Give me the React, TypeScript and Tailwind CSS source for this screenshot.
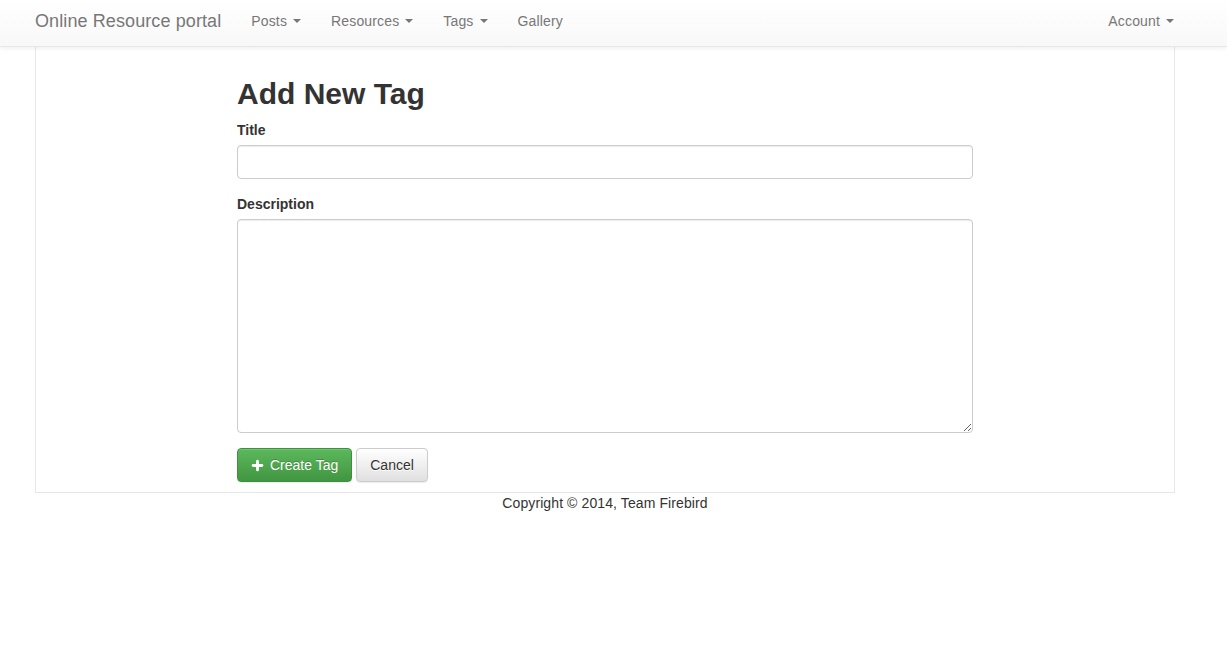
import { Plus } from 'lucide-react';

const navLinks = [
  { label: 'Posts', caret: true },
  { label: 'Resources', caret: true },
  { label: 'Tags', caret: true },
  { label: 'Gallery', caret: false },
];

function Caret() {
  return (
    <span className="ml-[6px] inline-block h-0 w-0 border-x-[4px] border-t-[4px] border-x-transparent border-t-[#777] align-middle" />
  );
}

export default function App() {
  return (
    <div className="min-h-screen bg-white text-[14px] text-[#333]" style={{ fontFamily: '"Liberation Sans", Arial, sans-serif' }}>
      {/* Navbar */}
      <nav className="relative z-10 h-[47px] border-b border-[#e7e7e7] bg-gradient-to-b from-white to-[#f8f8f8] shadow-[0_1px_5px_rgba(0,0,0,0.075)]">
        <div className="ml-[35px] flex h-full w-[1140px] items-center justify-between pb-[4px]">
          <div className="flex items-center">
            <span className="pr-[15px] text-[18px] tracking-[0.1px] text-[#777]">Online Resource portal</span>
            {navLinks.map(l => (
              <span key={l.label} className="flex items-center px-[15px] tracking-[0.15px] text-[#777]">
                {l.label}
                {l.caret && <Caret />}
              </span>
            ))}
          </div>
          <span className="flex items-center pr-[1px] tracking-[0.15px] text-[#777]">
            Account
            <Caret />
          </span>
        </div>
      </nav>

      {/* Main */}
      <div className="ml-[35px] w-[1140px] border-x border-b border-[#e7e7e7] pt-[30px] pb-[10px] pl-[201px]">
        <div className="w-[736px]">
          <h1 className="mb-[10px] text-[30px] leading-[33px] font-bold text-[#333]">Add New Tag</h1>

          <div className="mb-[15px]">
            <label className="mb-[5px] block font-bold leading-[20px]">Title</label>
            <input
              type="text"
              className="block h-[34px] w-full rounded-[4px] border border-[#ccc] px-[12px] shadow-[inset_0_1px_1px_rgba(0,0,0,0.075)] outline-none"
            />
          </div>

          <div className="mb-[15px]">
            <label className="mb-[5px] block font-bold leading-[20px]">Description</label>
            <textarea className="block h-[214px] w-full rounded-[4px] border border-[#ccc] px-[12px] py-[6px] shadow-[inset_0_1px_1px_rgba(0,0,0,0.075)] outline-none" />
          </div>

          <div className="flex gap-[4px]">
            <button className="flex h-[34px] items-center gap-[5px] rounded-[4px] border border-[#3e8f3e] bg-gradient-to-b from-[#5cb85c] to-[#419641] pr-[13px] pl-[12px] text-white [text-shadow:0_-1px_0_rgba(0,0,0,0.2)] shadow-[inset_0_1px_0_rgba(255,255,255,0.15),0_1px_1px_rgba(0,0,0,0.075)]">
              <Plus size={15} strokeWidth={4.5} />
              Create Tag
            </button>
            <button className="h-[34px] rounded-[4px] border border-[#ccc] bg-gradient-to-b from-white to-[#e0e0e0] px-[13px] text-[#333] [text-shadow:0_1px_0_#fff] shadow-[inset_0_1px_0_rgba(255,255,255,0.15),0_1px_1px_rgba(0,0,0,0.075)]">
              Cancel
            </button>
          </div>
        </div>
      </div>

      {/* Footer */}
      <div className="ml-[35px] w-[1140px] text-center leading-[20px] tracking-[0.1px]">Copyright © 2014, Team Firebird</div>
    </div>
  );
}
